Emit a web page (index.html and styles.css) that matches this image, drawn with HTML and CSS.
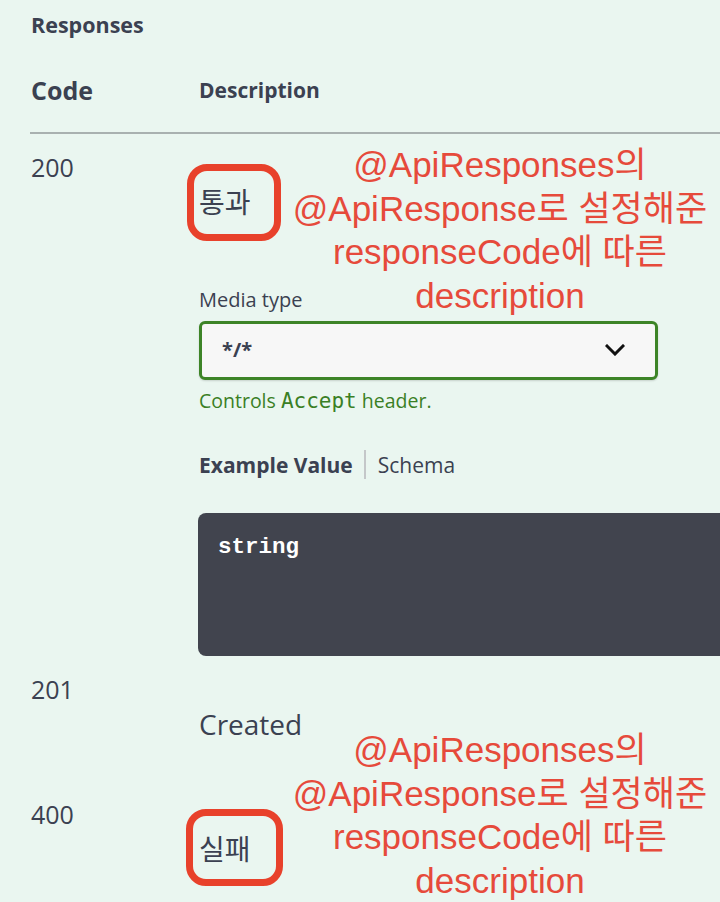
FILE: index.html
```html
<!DOCTYPE html>
<html lang="ko">
<head>
<meta charset="utf-8">
<title>Responses</title>
<link rel="stylesheet" href="styles.css">
</head>
<body>
<div class="page">
  <section class="responses">
    <h4 class="title">Responses</h4>
    <div class="table-head">
      <div class="head-code">Code</div>
      <div class="head-desc">Description</div>
    </div>

    <div class="row">
      <div class="code">200</div>
      <div class="desc">
        <div class="md"><span class="circled">통과</span></div>
        <div class="media-label">Media type</div>
        <div class="select">
          <span class="select-value">*/*</span>
          <svg class="chevron" width="20" height="12" viewBox="0 0 20 12"><path d="M2 2 L10 10 L18 2" fill="none" stroke="#111" stroke-width="3" stroke-linecap="square"/></svg>
        </div>
        <div class="controls">Controls <code>Accept</code> header.</div>
        <div class="tabs">
          <span class="tab active">Example Value</span>
          <span class="tab-sep"></span>
          <span class="tab">Schema</span>
        </div>
        <pre class="example">string</pre>
      </div>
    </div>

    <div class="row">
      <div class="code">201</div>
      <div class="desc">
        <div class="md plain">Created</div>
      </div>
    </div>

    <div class="row">
      <div class="code">400</div>
      <div class="desc">
        <div class="md"><span class="circled circled-2">실패</span></div>
      </div>
    </div>

    <div class="note note-1">@ApiResponses의<br>@ApiResponse로 설정해준<br>responseCode에 따른<br>description</div>
    <div class="note note-2">@ApiResponses의<br>@ApiResponse로 설정해준<br>responseCode에 따른<br>description</div>
  </section>
</div>
</body>
</html>
```

FILE: styles.css
```css
html, body {
  margin: 0;
  padding: 0;
  background: #eaf6f0;
  overflow: hidden;
}

.page {
  width: 720px;
  height: 902px;
  overflow: hidden;
  background: #eaf6f0;
  font-family: "Open Sans", "Noto Sans", "Noto Sans CJK KR", sans-serif;
  color: #3b4151;
}

.responses {
  position: relative;
  margin-left: 30px;
  width: 760px;
  padding-top: 11px;
}

.title {
  margin: 0;
  font-size: 21.5px;
  line-height: 28px;
  font-weight: 700;
  padding-left: 1px;
}

.table-head {
  display: grid;
  grid-template-columns: 168px 1fr;
  align-items: center;
  margin-top: 34px;
  padding-bottom: 25px;
  border-bottom: 2px solid #a9b1b0;
}

.head-code {
  font-size: 25px;
  line-height: 34px;
  font-weight: 700;
  padding-left: 1px;
}

.head-desc {
  font-size: 21px;
  line-height: 28px;
  font-weight: 700;
  padding-left: 1px;
}

.row {
  display: grid;
  grid-template-columns: 168px 1fr;
  padding-top: 17px;
}

.code {
  font-size: 25px;
  line-height: 32px;
  padding-left: 1px;
}

.desc {
  padding-top: 34px;
  padding-left: 1px;
}

.md {
  font-size: 28px;
  line-height: 34px;
  font-family: "Open Sans", "Noto Sans CJK KR", sans-serif;
}

.md.plain {
  font-size: 28px;
  padding-bottom: 40px;
}

.circled {
  position: relative;
  display: inline-block;
}

.circled::before {
  content: "";
  position: absolute;
  left: -12px;
  top: -21px;
  width: 94px;
  height: 77px;
  box-sizing: border-box;
  border: 7px solid #e8412b;
  border-radius: 20px;
}

.circled-2::before {
  top: -23px;
  left: -13px;
  width: 97px;
}

.media-label {
  margin-top: 67px;
  font-size: 20px;
  line-height: 27px;
}

.select {
  margin-top: 8px;
  width: 459px;
  height: 59px;
  box-sizing: border-box;
  border: 3px solid #3d8427;
  border-radius: 6px;
  background: #f7f7f7;
  box-shadow: 0 1px 2px rgba(0, 0, 0, 0.15);
  display: flex;
  align-items: center;
  justify-content: space-between;
  padding: 0 30px 2px 20px;
}

.select-value {
  font-size: 20px;
  font-weight: 700;
  line-height: 28px;
}

.chevron {
  display: block;
}

.controls {
  margin-top: 8px;
  font-size: 19.5px;
  line-height: 26px;
  color: #3a7f25;
}

.controls code {
  font-family: "DejaVu Sans Mono", "Liberation Mono", monospace;
  font-size: 21px;
  font-weight: 400;
}

.tabs {
  margin-top: 36px;
  display: flex;
  align-items: center;
  font-size: 21px;
  line-height: 28px;
}

.tab.active {
  font-weight: 700;
}

.tab-sep {
  width: 2px;
  height: 29px;
  background: #c4c7c9;
  margin: 0 12px 0 11px;
}

.example {
  margin: 34px 0 0 -1px;
  width: 560px;
  height: 143px;
  box-sizing: border-box;
  background: #41444e;
  border-radius: 8px;
  padding: 20px 20px;
  font-family: "Liberation Mono", "Courier New", monospace;
  font-weight: 700;
  font-size: 22.5px;
  line-height: 28px;
  color: #ffffff;
}

.note {
  position: absolute;
  left: 260px;
  width: 420px;
  text-align: center;
  font-family: "Liberation Sans", "Noto Sans CJK KR", sans-serif;
  font-size: 35px;
  line-height: 43.5px;
  color: #e64a3b;
}

.note-1 {
  top: 143px;
}

.note-2 {
  top: 728px;
}
```
